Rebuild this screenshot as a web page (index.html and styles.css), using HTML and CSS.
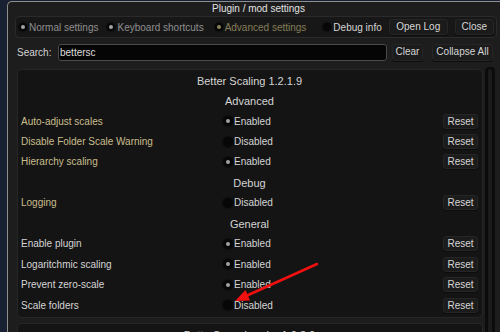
FILE: index.html
```html
<!DOCTYPE html>
<html lang="en">
<head>
  <meta charset="UTF-8">
  <title>Plugin / mod settings</title>
  <link rel="stylesheet" href="styles.css">
</head>
<body>
  <div class="settings-window">
    <div class="settings-title">Plugin / mod settings</div>

    <div class="settings-toolbar">
      <span class="radio on"></span><span class="opt">Normal settings</span>
      <span class="radio on gap-kb"></span><span class="opt">Keyboard shortcuts</span>
      <span class="radio on olive gap-adv"></span><span class="opt opt-active">Advanced settings</span>
      <span class="radio gap-debug"></span><span class="opt opt-light">Debug info</span>
      <button class="btn btn-log" type="button">Open Log</button>
      <button class="btn btn-close" type="button">Close</button>
    </div>

    <div class="search-row">
      <label class="search-label">Search:</label>
      <input class="search-input" type="text" value="bettersc">
      <button class="btn btn-clear" type="button">Clear</button>
      <button class="btn btn-collapse" type="button">Collapse All</button>
    </div>

    <div class="content">
      <div class="panels">
        <div class="plugin-panel">
          <div class="plugin-name">Better Scaling 1.2.1.9</div>

          <div class="section-name">Advanced</div>
          <div class="setting-row">
            <span class="setting-label advanced">Auto-adjust scales</span>
            <span class="toggle"><span class="radio big on"></span>Enabled</span>
            <button class="btn btn-reset" type="button">Reset</button>
          </div>
          <div class="setting-row">
            <span class="setting-label advanced">Disable Folder Scale Warning</span>
            <span class="toggle"><span class="radio big"></span>Disabled</span>
            <button class="btn btn-reset" type="button">Reset</button>
          </div>
          <div class="setting-row">
            <span class="setting-label advanced">Hierarchy scaling</span>
            <span class="toggle"><span class="radio big on"></span>Enabled</span>
            <button class="btn btn-reset" type="button">Reset</button>
          </div>

          <div class="section-name">Debug</div>
          <div class="setting-row">
            <span class="setting-label advanced">Logging</span>
            <span class="toggle"><span class="radio big"></span>Disabled</span>
            <button class="btn btn-reset" type="button">Reset</button>
          </div>

          <div class="section-name">General</div>
          <div class="setting-row">
            <span class="setting-label">Enable plugin</span>
            <span class="toggle"><span class="radio big on"></span>Enabled</span>
            <button class="btn btn-reset" type="button">Reset</button>
          </div>
          <div class="setting-row">
            <span class="setting-label">Logaritchmic scaling</span>
            <span class="toggle"><span class="radio big on"></span>Enabled</span>
            <button class="btn btn-reset" type="button">Reset</button>
          </div>
          <div class="setting-row">
            <span class="setting-label">Prevent zero-scale</span>
            <span class="toggle"><span class="radio big on"></span>Enabled</span>
            <button class="btn btn-reset" type="button">Reset</button>
          </div>
          <div class="setting-row">
            <span class="setting-label">Scale folders</span>
            <span class="toggle"><span class="radio big"></span>Disabled</span>
            <button class="btn btn-reset" type="button">Reset</button>
          </div>
        </div>

        <div class="plugin-panel">
          <div class="plugin-name">BetterSceneLoader 1.0.3.0</div>
        </div>
      </div>
      <div class="scrollbar"><div class="scroll-thumb"></div></div>
    </div>
  </div>

  <!-- annotation arrow drawn over the screenshot -->
  <svg class="annotation" width="500" height="332" viewBox="0 0 500 332">
    <line x1="317" y1="264" x2="246" y2="296" stroke="#f01010" stroke-width="2.5" stroke-linecap="round"/>
    <polygon points="235,301 250,300.5 245.5,290" fill="#f01010"/>
  </svg>
</body>
</html>
```

FILE: styles.css
```css
html, body {
  margin: 0;
  padding: 0;
  width: 100%;
  height: 100%;
  overflow: hidden;
}

body {
  background-color: #182131;
  font-family: "Liberation Sans", Arial, sans-serif;
  font-size: 10px;
  color: #d2d2d2;
  position: relative;
}

.settings-window {
  margin: 1px 0 0 7px;
  width: 496px;
  height: 345px;
  box-sizing: border-box;
  border: 1px solid #8e8e8e;
  border-right: none;
  border-radius: 5px 0 0 0;
  background-color: #1d1d1d;
}

.settings-title {
  height: 14px;
  line-height: 14px;
  text-align: center;
  color: #e2e2e2;
  padding-left: 6px;
}

.settings-toolbar {
  margin: 0 6px 0 7px;
  height: 22px;
  box-sizing: border-box;
  border: 1px solid #2a2a2a;
  border-radius: 4px;
  background-color: #171717;
  display: flex;
  align-items: center;
  padding-left: 3px;
}

.radio {
  width: 8px;
  height: 8px;
  border-radius: 50%;
  background-color: #070707;
  box-shadow: 0 0 1px 1px #0e0e0e;
  display: inline-flex;
  align-items: center;
  justify-content: center;
  margin-right: 2px;
  flex: none;
}

.radio.on:after {
  content: "";
  width: 4px;
  height: 4px;
  border-radius: 50%;
  background-color: #a2a2a2;
}

.radio.olive:after {
  background-color: #8a835a;
}

.radio.big {
  width: 10px;
  height: 10px;
  margin-right: 1px;
}

.gap-kb { margin-left: 9px; }
.gap-adv { margin-left: 11px; }
.gap-debug { margin-left: 17px; }

.opt {
  color: #8f8f8f;
  white-space: nowrap;
}

.opt-active {
  color: #857e58;
}

.opt-light {
  color: #d4d4d4;
}

.btn {
  font-family: inherit;
  font-size: 10px;
  color: #d6d6d6;
  background-color: #1b1b1b;
  border: 1px solid #262626;
  border-radius: 3px;
  padding: 0;
  height: 16px;
  line-height: 14px;
  text-align: center;
  box-shadow: 0 1px 0 #0c0c0c;
}

.btn-log {
  margin-left: 7px;
  width: 59px;
}

.btn-close {
  margin-left: 7px;
  width: 39px;
}

.search-row {
  margin-top: 4px;
  height: 20px;
  display: flex;
  align-items: center;
  padding-left: 9px;
}

.search-label {
  width: 41px;
  color: #d2d2d2;
}

.search-input {
  width: 329px;
  height: 17px;
  box-sizing: border-box;
  background-color: #050505;
  border: 1px solid #4a4a4a;
  border-radius: 3px;
  color: #dedede;
  font-family: inherit;
  font-size: 10px;
  padding: 0 1px;
  outline: none;
}

.btn-clear {
  margin-left: 5px;
  width: 31px;
  height: 17px;
}

.btn-collapse {
  margin-left: 9px;
  width: 61px;
  height: 17px;
}

.content {
  margin-top: 7px;
  padding-left: 9px;
  display: flex;
  gap: 2px;
}

.panels {
  width: 466px;
  display: flex;
  flex-direction: column;
  gap: 5px;
}

.plugin-panel {
  border: 1px solid #262626;
  border-radius: 5px;
  background-color: #141414;
  padding: 0 4px 1.5px 3px;
}

.plugin-name,
.section-name {
  height: 20.45px;
  box-sizing: border-box;
  padding-top: 3px;
  line-height: 17.45px;
  text-align: center;
  font-size: 11px;
  color: #d4d4d4;
}

.setting-row {
  height: 20.45px;
  display: grid;
  grid-template-columns: 202px 1fr 35px;
  align-items: center;
}

.setting-label {
  color: #d4d4d4;
  white-space: nowrap;
}

.setting-label.advanced {
  color: #c9bd8c;
}

.toggle {
  display: flex;
  align-items: center;
  color: #d4d4d4;
}

.btn-reset {
  width: 35px;
  height: 15px;
  line-height: 13px;
}

.scrollbar {
  width: 10px;
  height: 270px;
  margin-top: -2px;
  box-sizing: border-box;
  background-color: #0c0c0c;
  border-radius: 4px 4px 0 0;
  padding: 2px 2px 0 2px;
}

.scroll-thumb {
  height: 100%;
  background-color: #1b1b1b;
  border-left: 1px solid #0a0a0a;
  border-right: 1px solid #0a0a0a;
  border-radius: 3px 3px 0 0;
}

.annotation {
  position: absolute;
  left: 0;
  top: 0;
  pointer-events: none;
}
```
